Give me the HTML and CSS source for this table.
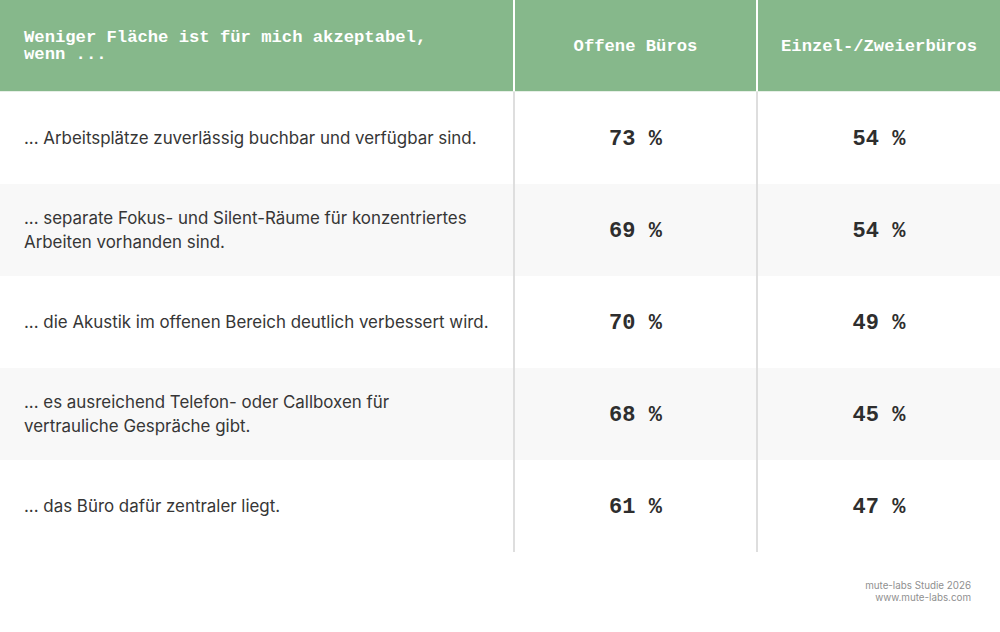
FILE: index.html
```html
<!DOCTYPE html>
<html lang="de">
<head>
<meta charset="utf-8">
<link rel="stylesheet" href="styles.css">
</head>
<body>
<div class="table">
  <div class="row head">
    <div class="cell label">Weniger Fläche ist für mich akzeptabel,<br>wenn ...</div>
    <div class="cell val">Offene Büros</div>
    <div class="cell val">Einzel-/Zweierbüros</div>
  </div>
  <div class="row">
    <div class="cell label">... Arbeitsplätze zuverlässig buchbar und verfügbar sind.</div>
    <div class="cell val">73 %</div>
    <div class="cell val">54 %</div>
  </div>
  <div class="row alt">
    <div class="cell label">... separate Fokus- und Silent-Räume für konzentriertes<br>Arbeiten vorhanden sind.</div>
    <div class="cell val">69 %</div>
    <div class="cell val">54 %</div>
  </div>
  <div class="row">
    <div class="cell label">... die Akustik im offenen Bereich deutlich verbessert wird.</div>
    <div class="cell val">70 %</div>
    <div class="cell val">49 %</div>
  </div>
  <div class="row alt">
    <div class="cell label">... es ausreichend Telefon- oder Callboxen für<br>vertrauliche Gespräche gibt.</div>
    <div class="cell val">68 %</div>
    <div class="cell val">45 %</div>
  </div>
  <div class="row">
    <div class="cell label">... das Büro dafür zentraler liegt.</div>
    <div class="cell val">61 %</div>
    <div class="cell val">47 %</div>
  </div>
</div>
<div class="footer">
  <div>mute-labs Studie 2026</div>
  <div>www.mute-labs.com</div>
</div>
</body>
</html>
```

FILE: styles.css
```css
html, body {
  margin: 0;
  padding: 0;
  background: #ffffff;
}
body {
  width: 1000px;
  height: 632px;
  overflow: hidden;
  font-family: Inter, "Liberation Sans", sans-serif;
}
.table {
  display: flex;
  flex-direction: column;
}
.row {
  display: grid;
  grid-template-columns: 515px 243px 242px;
  height: 92px;
  background: #ffffff;
}
.row.alt {
  background: #f8f8f8;
}
.row.head {
  height: 91px;
  background: #86b88b;
  border-bottom: 1px solid #e6efe6;
}
.cell {
  display: flex;
  align-items: center;
  border-right: 2px solid #dedede;
}
.cell:last-child {
  border-right: none;
}
.head .cell {
  border-right-color: #ffffff;
  padding-top: 1px;
}
.head .cell:last-child {
  border-right: none;
}
.label {
  padding-left: 24px;
  font-size: 16.9px;
  line-height: 24px;
  color: #363636;
}
.val {
  justify-content: center;
  padding-top: 2px;
  font-family: "Liberation Mono", monospace;
  font-weight: bold;
  font-size: 22px;
  color: #2e2e2e;
}
.head .label,
.head .val {
  font-family: "Liberation Mono", monospace;
  font-weight: bold;
  font-size: 17.2px;
  line-height: 17px;
  color: #ffffff;
}
.footer {
  margin-top: 28px;
  padding-right: 29px;
  text-align: right;
  font-family: Inter, "Liberation Sans", sans-serif;
  font-size: 9.8px;
  line-height: 12px;
  color: #8f8f8f;
}
```
